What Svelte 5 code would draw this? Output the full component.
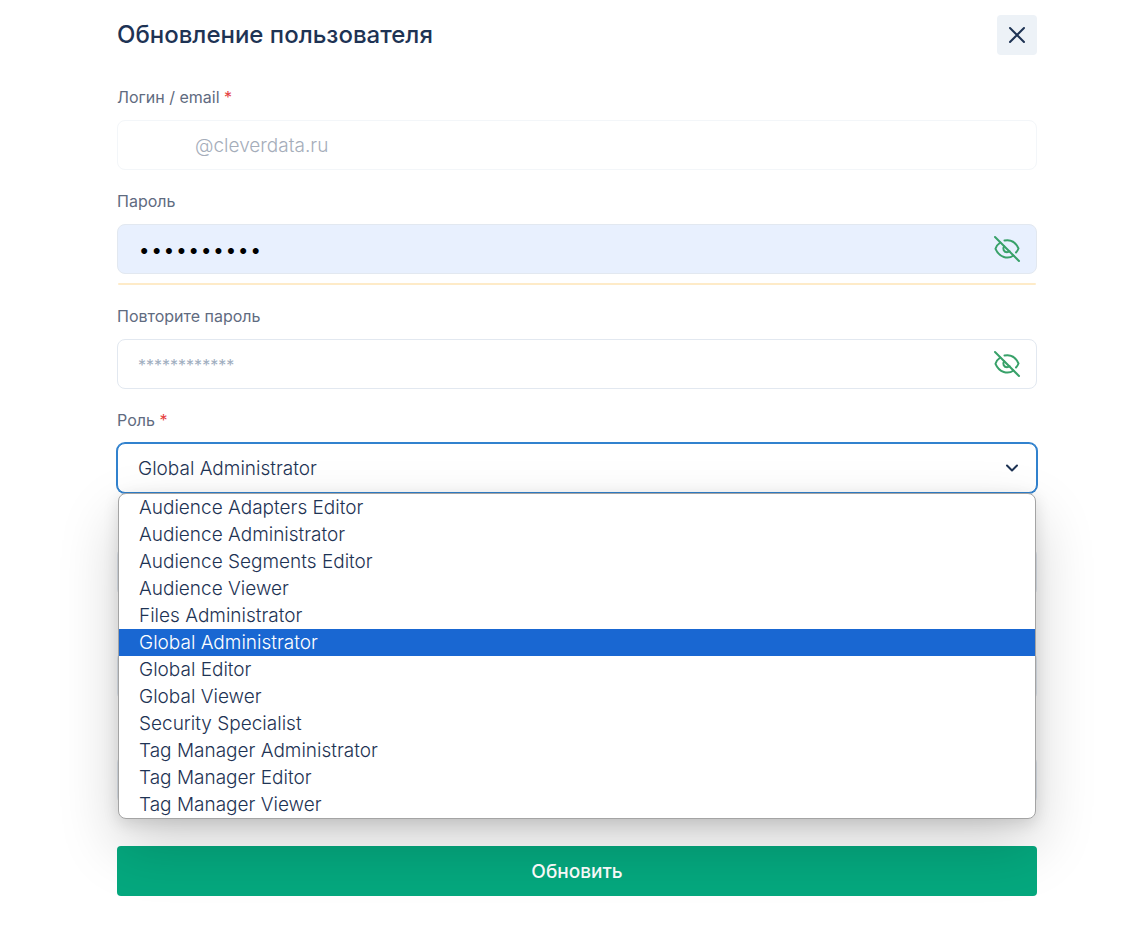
<script>
  const roles = [
    'Audience Adapters Editor',
    'Audience Administrator',
    'Audience Segments Editor',
    'Audience Viewer',
    'Files Administrator',
    'Global Administrator',
    'Global Editor',
    'Global Viewer',
    'Security Specialist',
    'Tag Manager Administrator',
    'Tag Manager Editor',
    'Tag Manager Viewer',
  ];

  let role = $state('Global Administrator');
  let menuOpen = $state(true);
  let password = $state('qwerty1234');
  let passwordRepeat = $state('');
  let showPassword = $state(false);
  let showRepeat = $state(false);

  function openMenu(event) {
    event.preventDefault();
    menuOpen = !menuOpen;
  }

  function pickRole(name) {
    role = name;
    menuOpen = false;
  }
</script>

{#snippet eyeOff()}
  <svg width="28" height="28" viewBox="0 0 28 28" fill="none" stroke="currentColor" stroke-width="2" stroke-linecap="round" stroke-linejoin="round" aria-hidden="true">
    <path d="M2 2l24 24" />
    <path d="M11.500 5.500C18 4.200 23 7.800 25.500 13.500c-.6 1.600-1.400 2.800-2.500 4" />
    <path d="M7.300 7.500C5 9 3.300 11.200 2.500 13.800c3.700 8.700 12.500 10.800 18 6.700" />
    <path d="M11.200 11.200c-2 2.700-.2 6 2.800 6 1 0 1.900-.3 2.700-.9" />
  </svg>
{/snippet}

<main>
  <header>
    <h1>Обновление пользователя</h1>
    <button class="close" type="button" aria-label="Закрыть">
      <svg width="18" height="18" viewBox="0 0 18 18" fill="none" stroke="currentColor" stroke-width="2" stroke-linecap="round" aria-hidden="true">
        <path d="M2 2l14 14M16 2L2 16" />
      </svg>
    </button>
  </header>

  <form onsubmit={(e) => e.preventDefault()}>
    <div class="field">
      <label for="login">Логин / email <span class="required">*</span></label>
      <input id="login" class="login" type="text" value="@cleverdata.ru" disabled />
    </div>

    <div class="field">
      <label for="password">Пароль</label>
      <div class="control">
        <input id="password" class="filled" type={showPassword ? 'text' : 'password'} bind:value={password} />
        <button class="eye" type="button" aria-label="Показать пароль" onclick={() => (showPassword = !showPassword)}>
          {@render eyeOff()}
        </button>
      </div>
      <div class="strength"></div>
    </div>

    <div class="field">
      <label for="repeat">Повторите пароль</label>
      <div class="control">
        <input id="repeat" type={showRepeat ? 'text' : 'password'} placeholder="************" bind:value={passwordRepeat} />
        <button class="eye" type="button" aria-label="Показать пароль" onclick={() => (showRepeat = !showRepeat)}>
          {@render eyeOff()}
        </button>
      </div>
    </div>

    <div class="field">
      <label for="role">Роль <span class="required">*</span></label>
      <div class="control">
        <select id="role" class:open={menuOpen} bind:value={role} onmousedown={openMenu}>
          {#each roles as name}
            <option value={name}>{name}</option>
          {/each}
        </select>
        <svg class="chevron" width="14" height="10" viewBox="0 0 14 10" fill="none" stroke="currentColor" stroke-width="2" stroke-linecap="round" stroke-linejoin="round" aria-hidden="true">
          <path d="M2 2.500l5 5 5-5" />
        </svg>
        {#if menuOpen}
          <div class="menu">
            {#each roles as name}
              <button type="button" class="item" class:selected={name === role} onclick={() => pickRole(name)}>{name}</button>
            {/each}
          </div>
        {/if}
      </div>
    </div>

    <div class="field extra"><input type="text" aria-label="Имя" /></div>
    <div class="field extra"><input type="text" aria-label="Фамилия" /></div>
    <div class="field extra"><input type="text" aria-label="Телефон" /></div>

    <button class="submit" type="submit">Обновить</button>
  </form>
</main>

<style>
  :global(body) {
    margin: 0;
    background: #fff;
  }

  main {
    padding: 15px 110px 30px 117px;
    font-family: Inter, 'Open Sans', sans-serif;
    color: #1e3354;
  }

  header {
    display: flex;
    align-items: center;
    justify-content: space-between;
    margin-bottom: 30px;
  }

  h1 {
    margin: 0;
    font-size: 24px;
    line-height: 32px;
    font-weight: 500;
  }

  button {
    padding: 0;
    border: none;
    background: none;
    font-family: inherit;
    cursor: pointer;
  }

  .close {
    display: flex;
    align-items: center;
    justify-content: center;
    width: 40px;
    height: 40px;
    border-radius: 4px;
    background: #edf2f7;
    color: #1e3354;
  }

  .field {
    margin-bottom: 19px;
  }

  label {
    display: block;
    margin-bottom: 11px;
    font-size: 16px;
    line-height: 24px;
    font-weight: 400;
    color: #5f6b80;
  }

  .required {
    color: #e53e3e;
  }

  .control {
    position: relative;
  }

  input,
  select {
    display: block;
    box-sizing: border-box;
    width: 100%;
    height: 50px;
    padding: 0 20px;
    border: 1px solid #e2e8f0;
    border-radius: 8px;
    outline: none;
    background: #fff;
    color: #1e3354;
    font-family: inherit;
    font-size: 19px;
    font-weight: 300;
  }

  .login {
    padding-left: 77px;
    border-color: #f3f6f9;
    color: #a5adba;
  }

  .filled {
    background: #e8f0fe;
    color: #000;
    font-size: 22px;
  }

  input::placeholder {
    color: #a0aec0;
    font-size: 16px;
    font-weight: 400;
    opacity: 1;
  }

  select {
    appearance: none;
  }

  select.open {
    border-color: #3182ce;
    box-shadow: 0 0 0 1px #3182ce;
  }

  .eye {
    position: absolute;
    top: 11px;
    right: 16px;
    width: 28px;
    height: 28px;
    color: #38a169;
  }

  .eye svg {
    display: block;
  }

  .chevron {
    position: absolute;
    top: 20px;
    right: 18px;
    pointer-events: none;
  }

  .strength {
    height: 2px;
    margin: 9px 1px 0;
    border-radius: 2px;
    background: #feebc8;
  }

  .menu {
    position: absolute;
    top: 100%;
    left: 1px;
    right: 1px;
    z-index: 1;
    overflow: hidden;
    border: 1px solid #a4a4a4;
    border-radius: 8px;
    background: #fff;
    box-shadow: 0 4px 16px rgba(0, 0, 0, 0.12), 0 26px 60px rgba(0, 0, 0, 0.18);
  }

  .item {
    display: block;
    width: 100%;
    padding: 0 20px;
    color: #1e3354;
    font-size: 19px;
    line-height: 27px;
    font-weight: 300;
    text-align: left;
  }

  .item.selected {
    background: #1967d2;
    color: #fff;
  }

  .extra {
    padding-top: 35px;
  }

  .submit {
    width: 100%;
    height: 50px;
    margin-top: 22px;
    border-radius: 4px;
    background: #05a87e;
    color: #fff;
    font-size: 19px;
    font-weight: 500;
  }
</style>
